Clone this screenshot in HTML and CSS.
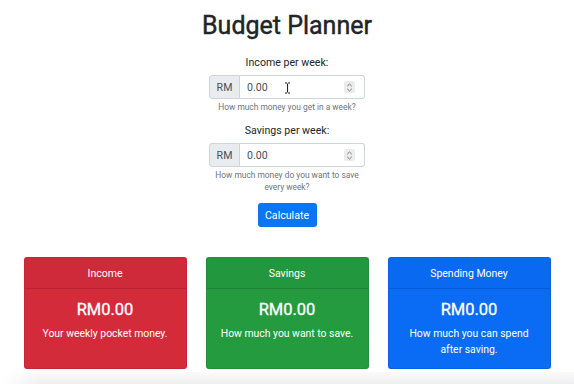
FILE: index.html
```html
<!DOCTYPE html>
<html lang="en">
<head>
<meta charset="utf-8">
<title>Budget Planner</title>
<link rel="stylesheet" href="styles.css">
</head>
<body>
<div class="page">
  <h1 class="title">Budget Planner</h1>
  <form class="form">
    <label class="label">Income per week:</label>
    <div class="input-group">
      <span class="addon">RM</span>
      <span class="field">
        <span class="value">0.00</span>
        <span class="spin"><svg width="7" height="9" viewBox="0 0 7 9"><path d="M1.2 3.2 L3.5 1 L5.8 3.2 M1.2 5.8 L3.5 8 L5.8 5.8" fill="none" stroke="#7a7a7a" stroke-width="1"/></svg></span>
        <svg class="cursor" width="7" height="12" viewBox="0 0 7 12"><path d="M1 1 H3 M4 1 H6 M3.5 1.5 V10.5 M1 11 H3 M4 11 H6" fill="none" stroke="#222" stroke-width="1.1"/></svg>
      </span>
    </div>
    <p class="help">How much money you get in a week?</p>

    <label class="label label-2">Savings per week:</label>
    <div class="input-group">
      <span class="addon">RM</span>
      <span class="field">
        <span class="value">0.00</span>
        <span class="spin"><svg width="7" height="9" viewBox="0 0 7 9"><path d="M1.2 3.2 L3.5 1 L5.8 3.2 M1.2 5.8 L3.5 8 L5.8 5.8" fill="none" stroke="#7a7a7a" stroke-width="1"/></svg></span>
      </span>
    </div>
    <p class="help">How much money do you want to save every week?</p>

    <button type="button" class="btn">Calculate</button>
  </form>

  <div class="cards">
    <div class="card card-red">
      <div class="card-header">Income</div>
      <div class="card-body">
        <h5 class="card-title">RM0.00</h5>
        <p class="card-text">Your weekly pocket money.</p>
      </div>
    </div>
    <div class="card card-green">
      <div class="card-header">Savings</div>
      <div class="card-body">
        <h5 class="card-title">RM0.00</h5>
        <p class="card-text">How much you want to save.</p>
      </div>
    </div>
    <div class="card card-blue">
      <div class="card-header">Spending Money</div>
      <div class="card-body">
        <h5 class="card-title">RM0.00</h5>
        <p class="card-text">How much you can spend after saving.</p>
      </div>
    </div>
  </div>
  <div class="shadow"></div>
</div>
</body>
</html>
```
FILE: styles.css
```css
html, body {
  margin: 0;
  padding: 0;
  background: #fff;
}
body {
  font-family: Roboto, "Liberation Sans", Arial, sans-serif;
  color: #212529;
  width: 574px;
  height: 384px;
  overflow: hidden;
}
.page {
  display: flex;
  flex-direction: column;
  align-items: center;
}
.title {
  margin: 10px 0 0;
  font-size: 25px;
  line-height: 31px;
  font-weight: 400;
  -webkit-text-stroke: 0.45px #212529;
}
.form {
  display: flex;
  flex-direction: column;
  align-items: center;
  width: 156px;
  text-align: center;
}
.label {
  margin-top: 13px;
  font-size: 10.6px;
  line-height: 17px;
}
.label-2 {
  margin-top: 9px;
}
.input-group {
  margin-top: 4px;
  display: flex;
  width: 156px;
  height: 24px;
  box-sizing: border-box;
}
.addon {
  width: 31px;
  box-sizing: border-box;
  background: #e9ecef;
  border: 1px solid #ced4da;
  border-radius: 3px 0 0 3px;
  display: flex;
  align-items: center;
  justify-content: center;
  font-size: 10.6px;
  color: #495057;
}
.field {
  position: relative;
  flex: 1;
  border: 1px solid #ced4da;
  border-left: none;
  border-radius: 0 3px 3px 0;
  display: flex;
  align-items: center;
  padding: 0 9px 0 7px;
  font-size: 10.6px;
  color: #495057;
}
.value {
  flex: 1;
  text-align: left;
}
.spin {
  width: 11px;
  height: 12px;
  background: #ececec;
  border-radius: 2px;
  display: flex;
  align-items: center;
  justify-content: center;
}
.cursor {
  position: absolute;
  left: 44px;
  top: 6px;
}
.help {
  margin: 2px 0 0;
  font-size: 8.4px;
  line-height: 12px;
  color: #6c757d;
  width: 150px;
}
.btn {
  margin-top: 10px;
  height: 24px;
  width: 59px;
  padding: 0;
  border: none;
  border-radius: 3px;
  background: #0a75f5;
  color: #fff;
  font-family: inherit;
  font-size: 10.6px;
}
.cards {
  margin-top: 30px;
  display: flex;
  gap: 19px;
  width: 527px;
}
.card {
  flex: 1;
  border-radius: 3px;
  color: #fff;
  text-align: center;
  display: flex;
  flex-direction: column;
  border: 1px solid rgba(0,0,0,0.08);
  box-sizing: border-box;
  height: 112px;
}
.card-red { background: #d42b3b; }
.card-green { background: #249b3f; }
.card-blue { background: #0a6cf5; }
.card-header {
  height: 31px;
  box-sizing: border-box;
  display: flex;
  align-items: center;
  justify-content: center;
  font-size: 10.5px;
  background: rgba(0,0,0,0.02);
  border-bottom: 1px solid rgba(0,0,0,0.12);
}
.card-body {
  padding: 11px 10px 10px;
}
.card-title {
  margin: 0;
  font-size: 16.5px;
  line-height: 20px;
  font-weight: 400;
  -webkit-text-stroke: 0.3px #fff;
}
.card-text {
  margin: 6px 0 0;
  font-size: 10.4px;
  line-height: 16px;
}
.shadow {
  margin-top: 3px;
  width: 574px;
  height: 12px;
  background: linear-gradient(to bottom, #fbfbfb, #efeff1);
  -webkit-mask-image: linear-gradient(to right, transparent 0, #000 40px);
}
```
